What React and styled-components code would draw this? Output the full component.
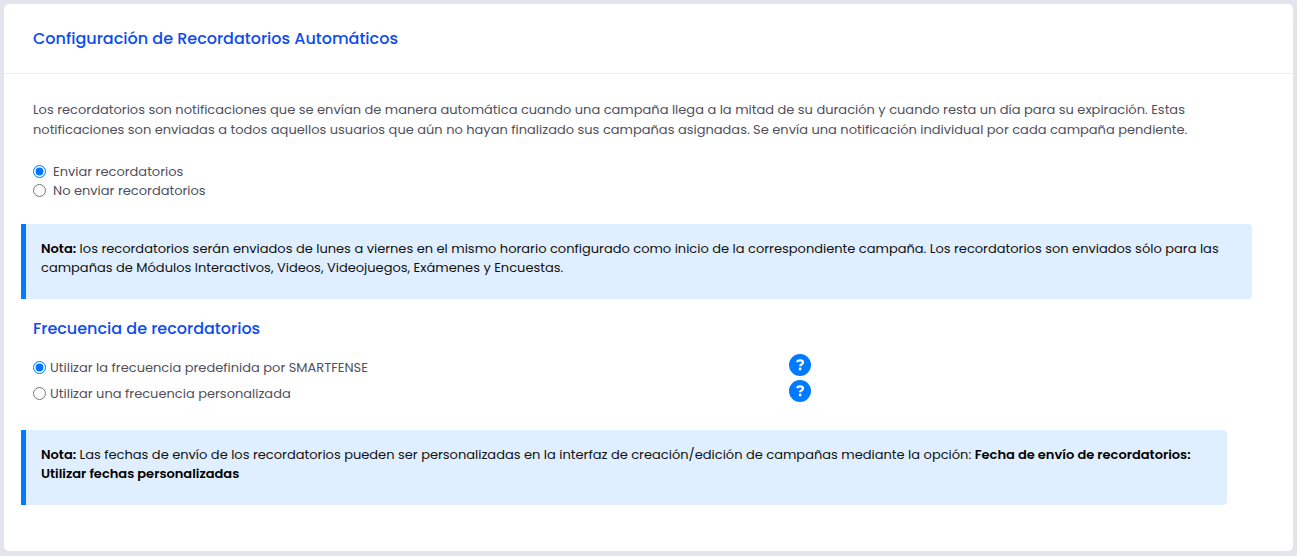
import React, { useState } from "react";
import styled, { createGlobalStyle } from "styled-components";

const GlobalStyle = createGlobalStyle`
  * {
    box-sizing: border-box;
  }

  body {
    margin: 0;
    background-color: #e4e7ee;
    color: #504f5c;
    font-family: Poppins, Inter, sans-serif;
    font-size: 13px;
    font-weight: 400;
    line-height: 19px;
  }
`;

const Page = styled.main`
  padding: 4px 4px 5px;
`;

const Card = styled.section`
  background-color: #fff;
  border-radius: 5px;
  box-shadow: 0 1px 15px 1px rgba(69, 65, 78, 0.04);
`;

const CardHeader = styled.header`
  padding: 23px 29px 22px;
  border-bottom: 1px solid #ebedf2;
`;

const CardBody = styled.div`
  padding: 26px 32px 46px 29px;
`;

const Title = styled.h2`
  margin: 0;
  color: #0a4cf0;
  font-size: 16px;
  font-weight: 500;
  line-height: 24px;
`;

const Description = styled.p`
  margin: 0;
  max-width: 1170px;
  line-height: 20px;
`;

const Options = styled.div`
  margin: 22px 0 24px;
`;

const FrequencyOptions = styled.div`
  display: grid;
  grid-template-columns: 8fr 5fr;
  grid-auto-rows: 26px;
  align-items: center;
  margin: 13px 0 24px;
`;

const Option = styled.label`
  display: flex;
  align-items: center;
  gap: ${(props) => props.$gap};
`;

const Radio = styled.input`
  width: 13px;
  height: 13px;
  margin: 0;
  accent-color: #0075ff;
`;

const HelpButton = styled.button`
  display: flex;
  align-self: start;
  justify-self: start;
  padding: 0;
  border: 0;
  border-radius: 50%;
  background: none;
  cursor: pointer;
`;

const Note = styled.div`
  margin: 0 ${(props) => props.$right} 18px -12px;
  padding: 15px 15px 22px;
  border-left: 5px solid #007bff;
  border-radius: 0 4px 4px 0;
  background-color: #e0efff;
  color: #111;

  &:last-child {
    margin-bottom: 0;
  }

  strong {
    color: #000;
    font-weight: 600;
  }
`;

function HelpIcon() {
  return (
    <svg width="22" height="22" viewBox="0 0 22 22" fill="none" aria-hidden="true">
      <circle cx="11" cy="11" r="11" fill="#007bff" />
      <path
        d="M8 8.1C8.4 6.9 9.5 6.4 11 6.4c1.8 0 3 .8 3 2.2 0 1.9-2.9 1.8-2.9 3.6"
        stroke="#fff"
        strokeWidth="2.2"
      />
      <circle cx="11.1" cy="15" r="1.4" fill="#fff" />
    </svg>
  );
}

function RadioOption({ name, value, selected, onSelect, gap, children }) {
  return (
    <Option $gap={gap}>
      <Radio
        type="radio"
        name={name}
        value={value}
        checked={selected === value}
        onChange={() => onSelect(value)}
      />
      {children}
    </Option>
  );
}

export default function App() {
  const [reminders, setReminders] = useState("send");
  const [frequency, setFrequency] = useState("default");

  return (
    <Page>
      <GlobalStyle />
      <Card>
        <CardHeader>
          <Title>Configuración de Recordatorios Automáticos</Title>
        </CardHeader>
        <CardBody>
          <Description>
            Los recordatorios son notificaciones que se envían de manera automática cuando una
            campaña llega a la mitad de su duración y cuando resta un día para su expiración. Estas
            notificaciones son enviadas a todos aquellos usuarios que aún no hayan finalizado sus
            campañas asignadas. Se envía una notificación individual por cada campaña pendiente.
          </Description>
          <Options role="radiogroup">
            <RadioOption name="reminders" value="send" selected={reminders} onSelect={setReminders} gap="7px">
              Enviar recordatorios
            </RadioOption>
            <RadioOption name="reminders" value="none" selected={reminders} onSelect={setReminders} gap="7px">
              No enviar recordatorios
            </RadioOption>
          </Options>
          <Note $right="9px">
            <strong>Nota:</strong> los recordatorios serán enviados de lunes a viernes en el mismo
            horario configurado como inicio de la correspondiente campaña. Los recordatorios son
            enviados sólo para las campañas de Módulos Interactivos, Videos, Videojuegos, Exámenes y
            Encuestas.
          </Note>
          <Title>Frecuencia de recordatorios</Title>
          <FrequencyOptions role="radiogroup">
            <RadioOption name="frequency" value="default" selected={frequency} onSelect={setFrequency} gap="4px">
              Utilizar la frecuencia predefinida por SMARTFENSE
            </RadioOption>
            <HelpButton type="button" aria-label="Ayuda sobre la frecuencia predefinida">
              <HelpIcon />
            </HelpButton>
            <RadioOption name="frequency" value="custom" selected={frequency} onSelect={setFrequency} gap="4px">
              Utilizar una frecuencia personalizada
            </RadioOption>
            <HelpButton type="button" aria-label="Ayuda sobre la frecuencia personalizada">
              <HelpIcon />
            </HelpButton>
          </FrequencyOptions>
          <Note $right="34px">
            <strong>Nota:</strong> Las fechas de envío de los recordatorios pueden ser personalizadas
            en la interfaz de creación/edición de campañas mediante la opción:{" "}
            <strong>Fecha de envío de recordatorios: Utilizar fechas personalizadas</strong>
          </Note>
        </CardBody>
      </Card>
    </Page>
  );
}
